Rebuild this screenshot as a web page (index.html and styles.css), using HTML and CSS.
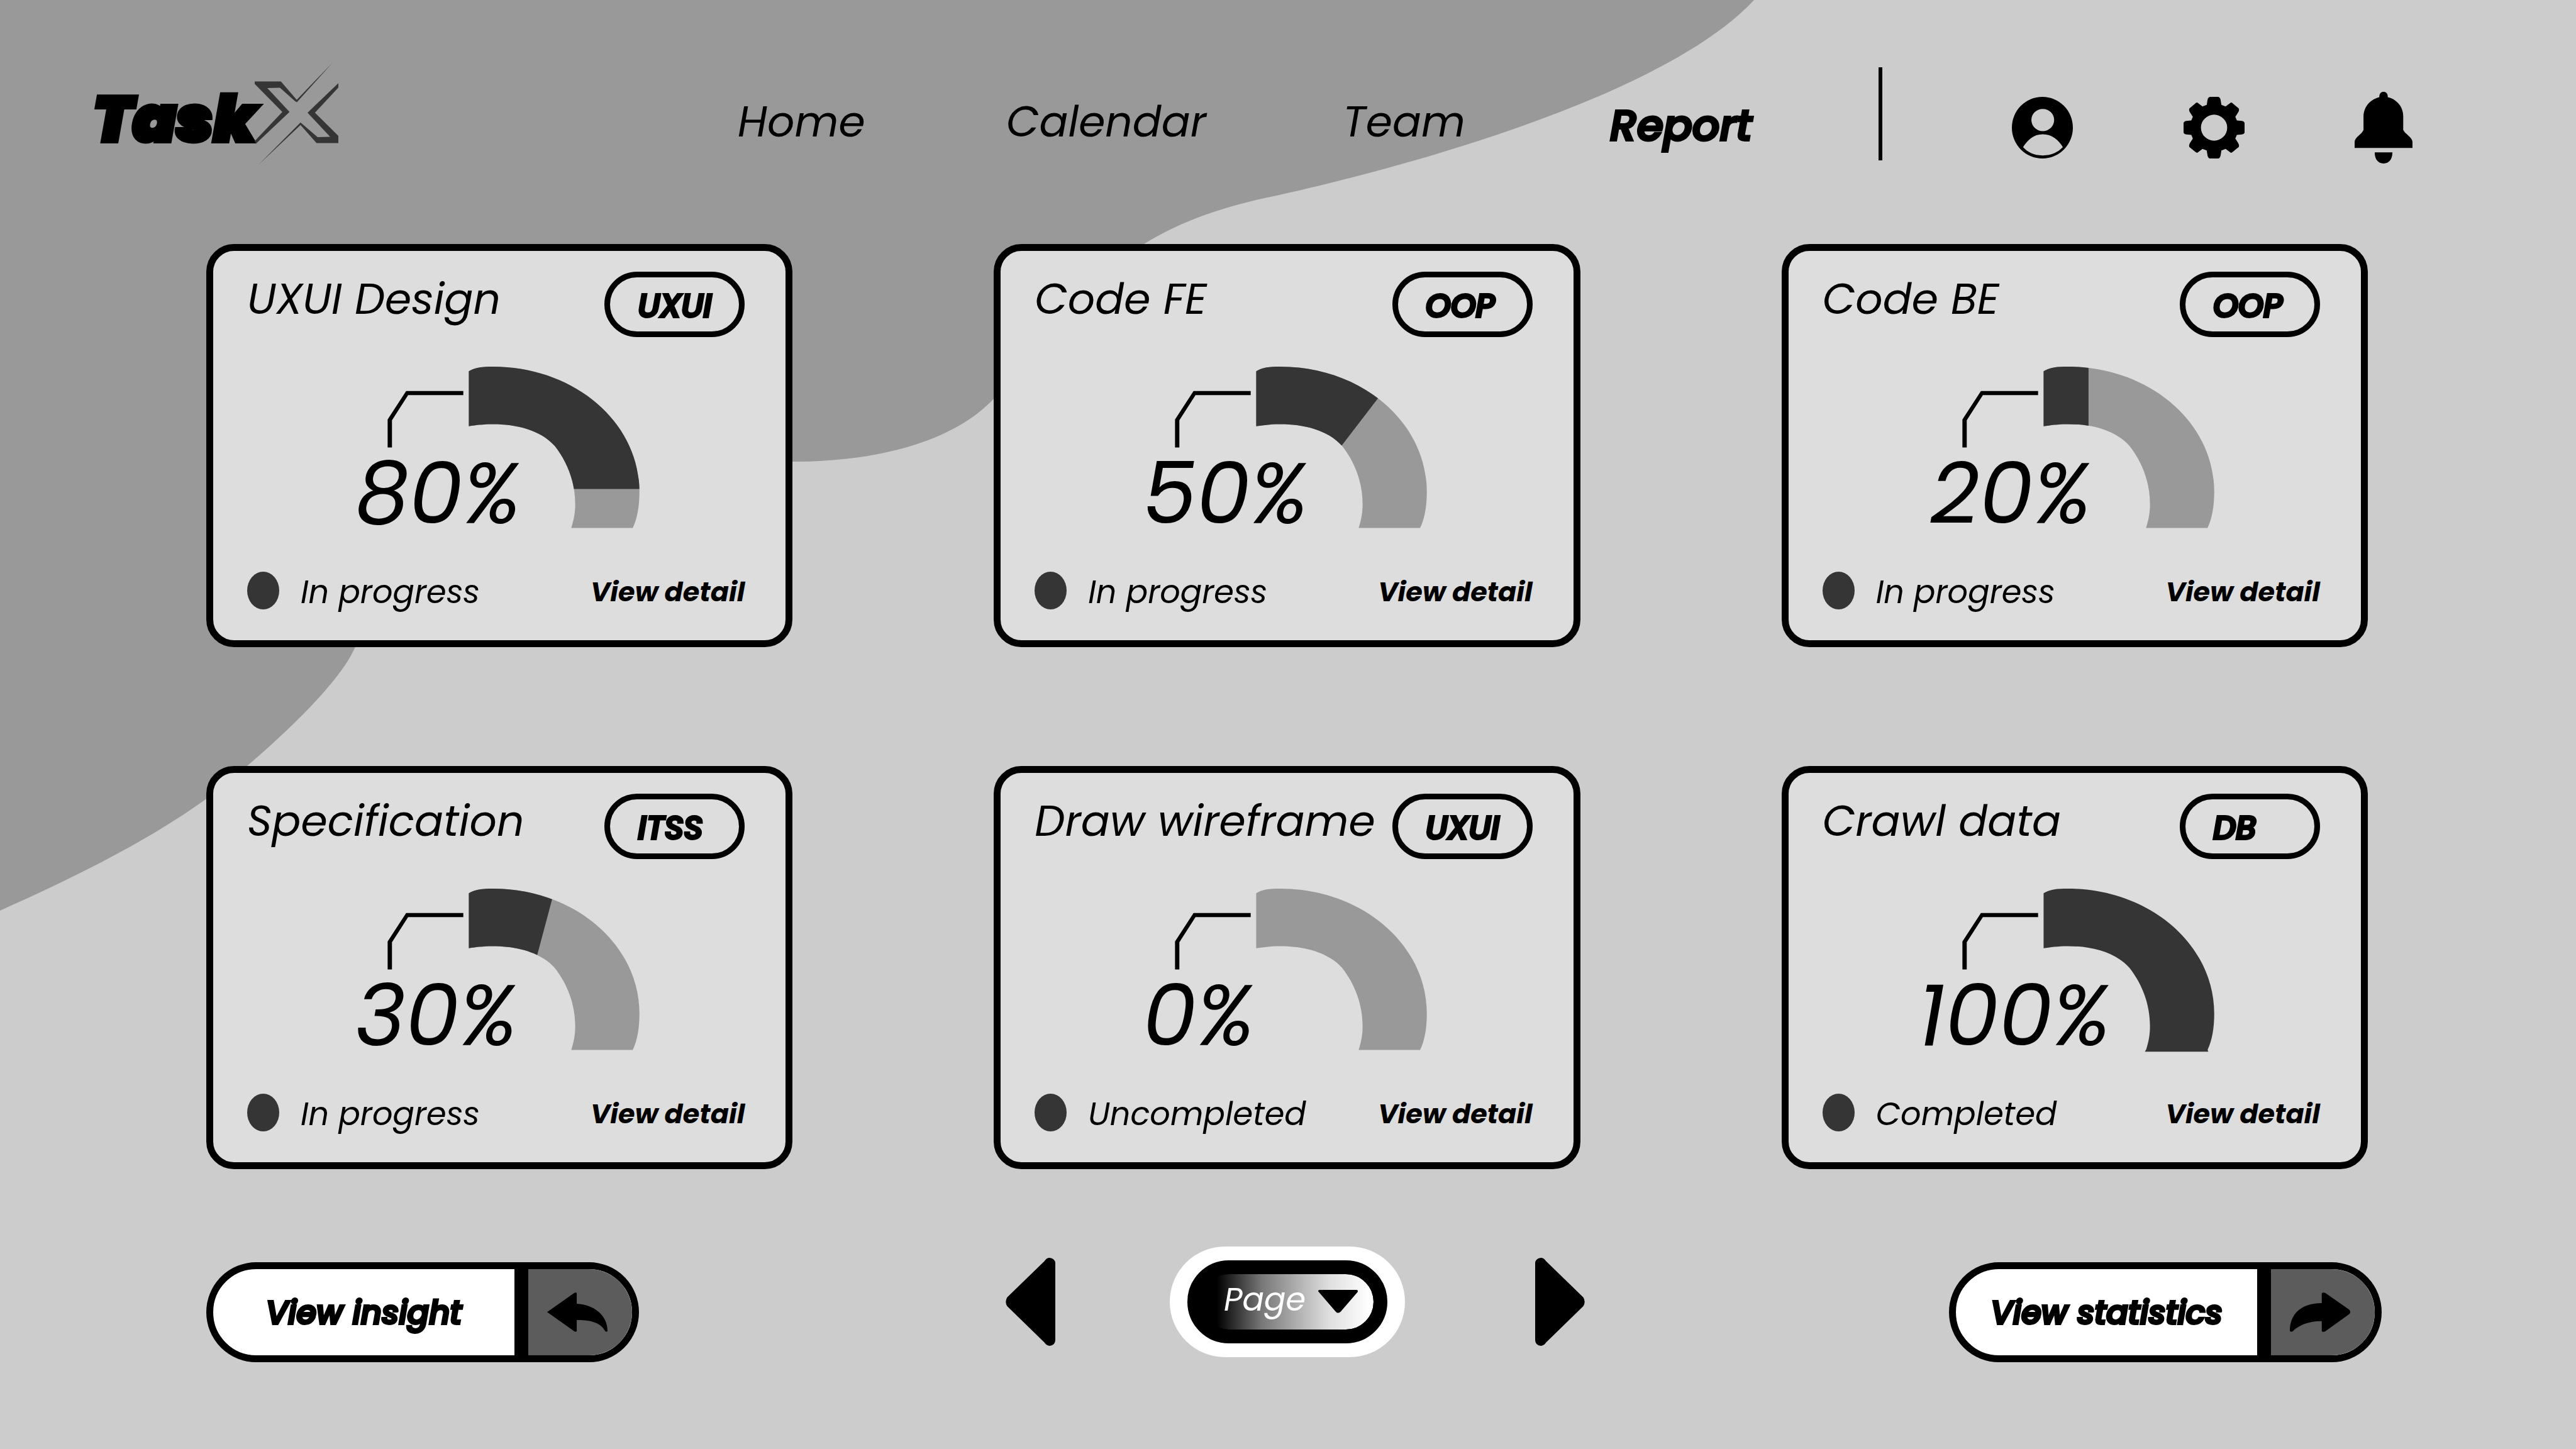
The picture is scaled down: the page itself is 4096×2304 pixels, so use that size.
FILE: index.html
```html
<!DOCTYPE html>
<html lang="en">
<head>
<meta charset="utf-8">
<title>TaskX – Report</title>
<meta name="viewport" content="width=device-width, initial-scale=1">
<link rel="stylesheet" href="styles.css">
</head>
<body>
<svg class="defs" aria-hidden="true">
  <defs>
    <path id="arc" d="M699 514C715 499 735 497 760 497C965 497 1132 700 1132 958C1132 1010 1127 1055 1115 1092H959C966 1060 969 1035 969 1004C969 925 950 850 917 789C880 730 820 709 760 709C735 709 715 713 699 717Z"/>
    <path id="leader" d="M493 795V692L540 587H685V602H545L504 695V795Z"/>
    <clipPath id="fill-80"><path d="M690 480H1150V948H690Z"/></clipPath>
    <clipPath id="fill-50"><path d="M690 480H1079L1010 610L915 790L862 890H690Z"/></clipPath>
    <clipPath id="fill-30"><path d="M690 480H921L910 538L872 745L863 795H690Z"/></clipPath>
    <clipPath id="fill-20"><path d="M690 480H813V800H690Z"/></clipPath>
  </defs>
</svg>
<div class="page">
  <svg class="backdrop" viewBox="0 0 4096 2304" preserveAspectRatio="none" aria-hidden="true">
    <path d="M0 0H2789C2650 150 2250 262 2030 311C1950 327 1880 350 1819 388C1720 450 1660 530 1582 632C1520 700 1400 734 1262 734C950 740 690 830 565 1028C543 1082 455 1165 393 1218C290 1312 130 1390 0 1448Z"/>
  </svg>

  <header class="topbar">
    <a class="logo" href="#" aria-label="TaskX">
      <span class="logo-text">Task</span>
      <svg class="logo-x" viewBox="909 92 418 630" preserveAspectRatio="none" aria-hidden="true">
        <path d="M909 207H1040L1119 320L1297 92L1120 335L1112 330L1035 246L972 248L1083 395L915 592L909 575L1047 395L909 222Z"/>
        <path d="M1327 217V245L1210 400L1327 543V588H1218L1138 476L928 722L1138 460L1223 551L1286 549L1173 400Z"/>
      </svg>
    </a>
    <nav class="nav" aria-label="Main">
      <a href="#">Home</a>
      <a href="#">Calendar</a>
      <a href="#">Team</a>
      <a class="current" href="#" aria-current="page">Report</a>
    </nav>
    <div class="tools">
      <button class="icon-button" type="button" aria-label="Account">
        <svg class="icon-user" viewBox="396 291 158 383" preserveAspectRatio="none"><path fill-rule="evenodd" d="M396 482.500A79 191.500 0 0 1 554 482.500A79 191.500 0 0 1 396 482.500ZM446.500 435A29.500 69 0 0 0 505.500 435A29.500 69 0 0 0 446.500 435ZM425 604C437 635 452 655 476 655C500 655 515 635 528 604C517 560 500 524 476 524C452 524 437 560 425 604Z"/></svg>
      </button>
      <button class="icon-button" type="button" aria-label="Settings">
        <svg class="icon-gear" viewBox="-79 -192 158 384" preserveAspectRatio="none"><path fill-rule="evenodd" d="M-11 -192H11Q16 -188 17 -172L19 -142L30 -132L43 -156Q46 -158 50 -148L64 -120Q66 -108 62 -94L55 -68L59 -45L72 -42Q79 -38 79 -28V28Q79 38 72 42L59 45L55 68L62 94Q66 108 64 120L50 148Q46 158 43 156L30 132L19 142L17 172Q16 188 11 192H-11Q-16 188 -17 172L-19 142L-30 132L-43 156Q-46 158 -50 148L-64 120Q-66 108 -62 94L-55 68L-59 45L-72 42Q-79 38 -79 28V-28Q-79 -38 -72 -42L-59 -45L-55 -68L-62 -94Q-66 -108 -64 -120L-50 -148Q-46 -158 -43 -156L-30 -132L-19 -142L-17 -172Q-16 -188 -11 -192ZM-34 0A34 81 0 0 0 34 0A34 81 0 0 0 -34 0Z"/></svg>
      </button>
      <button class="icon-button" type="button" aria-label="Notifications">
        <svg class="icon-bell" viewBox="1286 279 150 444" preserveAspectRatio="none"><path d="M1361 279C1367 279 1372 288 1372 312C1395 325 1412 370 1412 430V515C1416 540 1436 560 1436 590V627H1286V590C1286 560 1306 540 1309 515V430C1310 370 1327 325 1350 312C1350 288 1355 279 1361 279ZM1338 654H1384C1384 700 1374 723 1361 723C1348 723 1338 700 1338 654Z"/></svg>
      </button>
    </div>
  </header>

  <main>
    <section class="cards" aria-label="Task progress">
      <article class="card">
        <div class="card-head"><h2>UXUI Design</h2><span class="tag">UXUI</span></div>
        <div class="gauge">
          <svg viewBox="419 497 715 603" preserveAspectRatio="none" aria-hidden="true"><use href="#leader"/><use class="track" href="#arc"/><use class="fill" href="#arc" clip-path="url(#fill-80)"/></svg>
          <p class="value"><span>80%</span></p>
        </div>
        <div class="card-foot"><span class="dot"></span><span class="status">In progress</span><a href="#">View detail</a></div>
      </article>
      <article class="card">
        <div class="card-head"><h2>Code FE</h2><span class="tag">OOP</span></div>
        <div class="gauge">
          <svg viewBox="419 497 715 603" preserveAspectRatio="none" aria-hidden="true"><use href="#leader"/><use class="track" href="#arc"/><use class="fill" href="#arc" clip-path="url(#fill-50)"/></svg>
          <p class="value"><span>50%</span></p>
        </div>
        <div class="card-foot"><span class="dot"></span><span class="status">In progress</span><a href="#">View detail</a></div>
      </article>
      <article class="card">
        <div class="card-head"><h2>Code BE</h2><span class="tag">OOP</span></div>
        <div class="gauge">
          <svg viewBox="419 497 715 603" preserveAspectRatio="none" aria-hidden="true"><use href="#leader"/><use class="track" href="#arc"/><use class="fill" href="#arc" clip-path="url(#fill-20)"/></svg>
          <p class="value"><span>20%</span></p>
        </div>
        <div class="card-foot"><span class="dot"></span><span class="status">In progress</span><a href="#">View detail</a></div>
      </article>
      <article class="card">
        <div class="card-head"><h2>Specification</h2><span class="tag">ITSS</span></div>
        <div class="gauge">
          <svg viewBox="419 497 715 603" preserveAspectRatio="none" aria-hidden="true"><use href="#leader"/><use class="track" href="#arc"/><use class="fill" href="#arc" clip-path="url(#fill-30)"/></svg>
          <p class="value"><span>30%</span></p>
        </div>
        <div class="card-foot"><span class="dot"></span><span class="status">In progress</span><a href="#">View detail</a></div>
      </article>
      <article class="card">
        <div class="card-head"><h2>Draw wireframe</h2><span class="tag">UXUI</span></div>
        <div class="gauge">
          <svg viewBox="419 497 715 603" preserveAspectRatio="none" aria-hidden="true"><use href="#leader"/><use class="track" href="#arc"/></svg>
          <p class="value"><span>0%</span></p>
        </div>
        <div class="card-foot"><span class="dot"></span><span class="status">Uncompleted</span><a href="#">View detail</a></div>
      </article>
      <article class="card">
        <div class="card-head"><h2>Crawl data</h2><span class="tag">DB</span></div>
        <div class="gauge">
          <svg viewBox="419 497 715 603" preserveAspectRatio="none" aria-hidden="true"><use href="#leader"/><use class="fill" href="#arc"/><path class="fill" d="M959 1091H1115L1117 1098H956Z"/></svg>
          <p class="value"><span>100%</span></p>
        </div>
        <div class="card-foot"><span class="dot"></span><span class="status">Completed</span><a href="#">View detail</a></div>
      </article>
    </section>
  </main>

  <footer class="actions">
    <button class="split" type="button">
      <span class="split-label">View insight</span>
      <span class="split-icon"><svg viewBox="1192 353 206 241" preserveAspectRatio="none" aria-hidden="true"><path d="M1192 473L1285 356Q1293 350 1293 360V422C1350 427 1398 490 1398 588Q1394 596 1390 588C1375 540 1345 520 1293 521V586Q1293 596 1285 590Z"/></svg></span>
    </button>
    <div class="pager">
      <button class="icon-button" type="button" aria-label="Previous page">
        <svg class="arrow" viewBox="63 195 124 546" preserveAspectRatio="none"><path d="M67 440L160 215Q165 195 173 195Q187 200 187 230V705Q187 736 173 741Q165 741 160 721L67 495Q60 468 67 440Z"/></svg>
      </button>
      <div class="page-picker">
        <select aria-label="Page"><option>Page</option></select>
        <svg class="caret" viewBox="844 387 99 144" preserveAspectRatio="none" aria-hidden="true"><path d="M848 387H940Q945 390 942 402L900 522Q893 537 888 522L846 402Q841 390 848 387Z"/></svg>
      </div>
      <button class="icon-button" type="button" aria-label="Next page">
        <svg class="arrow" viewBox="-187 195 124 546" preserveAspectRatio="none"><path transform="scale(-1 1)" d="M67 440L160 215Q165 195 173 195Q187 200 187 230V705Q187 736 173 741Q165 741 160 721L67 495Q60 468 67 440Z"/></svg>
      </button>
    </div>
    <button class="split" type="button">
      <span class="split-label">View statistics</span>
      <span class="split-icon"><svg viewBox="1198 315 193 252" preserveAspectRatio="none" aria-hidden="true"><path d="M1388 453L1311 563Q1300 570 1300 558V498C1260 496 1225 525 1208 561Q1202 570 1198 560C1198 460 1230 383 1300 383V322Q1302 312 1311 318L1388 425Q1394 440 1388 453Z"/></svg></span>
    </button>
  </footer>
</div>
</body>
</html>
```
FILE: styles.css
```css
* {
  box-sizing: border-box;
}

body {
  margin: 0;
  background: #ccc;
  color: #000;
  font-family: Poppins, Inter, "Open Sans", sans-serif;
  font-style: italic;
}

a {
  color: inherit;
  text-decoration: none;
}

h2,
p {
  margin: 0;
  font-weight: 400;
}

button,
select {
  margin: 0;
  padding: 0;
  border: 0;
  background: none;
  color: inherit;
  font: inherit;
}

svg {
  display: block;
}

.defs {
  position: absolute;
  width: 0;
  height: 0;
}

.page {
  position: relative;
  min-height: 100vh;
  isolation: isolate;
}

.backdrop {
  position: absolute;
  inset: 0;
  z-index: -1;
  width: 100%;
  height: 100%;
  fill: #999;
}

/* Top bar */

.topbar {
  display: grid;
  grid-template-columns: 1025fr 1814fr 849fr;
  align-items: center;
  padding: 100px 260px 126px 148px;
}

.logo {
  display: flex;
  align-items: center;
}

.logo-text {
  width: 257px;
  padding-top: 18px;
  font-size: 102px;
  line-height: 100px;
  font-weight: 900;
  -webkit-text-stroke: 6px #000;
}

.logo-x {
  width: 133px;
  height: 162px;
  fill: #353535;
}

.nav {
  display: grid;
  grid-template-columns: 427fr 535fr 425fr 427fr;
  align-items: center;
  padding-top: 26px;
  font-size: 68px;
  line-height: 80px;
}

.nav .current {
  padding-top: 12px;
  font-weight: 500;
  -webkit-text-stroke: 4px #000;
}

.tools {
  display: flex;
  justify-content: space-between;
  align-items: center;
  height: 148px;
  padding: 44px 0 0 206px;
  border-left: 6px solid #000;
}

.icon-button {
  cursor: pointer;
}

.icon-user,
.icon-gear {
  width: 97px;
  height: 98px;
}

.icon-bell {
  width: 92px;
  height: 114px;
}

/* Cards */

.cards {
  display: grid;
  grid-template-columns: repeat(3, 1fr);
  gap: 189px 320px;
  padding: 0 331px 0 328px;
}

.card {
  padding: 33px 65px 49px 54px;
  border: 11px solid #000;
  border-radius: 44px;
  background: #ddd;
}

.card-head {
  display: flex;
  justify-content: space-between;
  align-items: center;
  white-space: nowrap;
}

.card-head h2 {
  padding-bottom: 16px;
  font-size: 68px;
  line-height: 80px;
}

.tag {
  width: 223px;
  padding: 4px 0 0 44px;
  border: 9px solid #000;
  border-radius: 52px;
  font-size: 51px;
  line-height: 82px;
  font-weight: 500;
  -webkit-text-stroke: 4px #000;
}

/* The leader line and the arc share one drawing, with the value set under the line */
.gauge {
  display: grid;
  width: 458px;
  height: 260px;
  margin: 47px auto 66px;
}

.gauge > * {
  grid-area: 1 / 1;
}

.gauge svg {
  justify-self: end;
  width: 448px;
  height: 260px;
}

.track {
  fill: #999;
}

.fill {
  fill: #353535;
}

.value {
  display: flex;
  justify-content: center;
  align-self: end;
  width: 266px;
  margin: 0 0 8px 5px;
  font-size: 136px;
  line-height: 100px;
}

.value span {
  flex: none;
  min-width: 266px;
}

.card-foot {
  display: flex;
  align-items: center;
  gap: 34px;
  font-size: 51px;
  line-height: 56px;
}

.dot {
  width: 51px;
  height: 60px;
  border-radius: 50%;
  background: #353535;
}

.status,
.card-foot a {
  padding-top: 4px;
}

.card-foot a {
  margin-left: auto;
  font-size: 43px;
  font-weight: 700;
}

/* Bottom actions */

.actions {
  display: flex;
  justify-content: space-between;
  align-items: flex-start;
  padding: 123px 309px 0 328px;
}

.split {
  display: flex;
  width: 688px;
  height: 159px;
  margin-top: 25px;
  overflow: hidden;
  border: 11px solid #000;
  border-radius: 80px;
  background: #fff;
  cursor: pointer;
}

.split-label {
  flex: 1;
  align-self: center;
  font-size: 51px;
  line-height: 60px;
  font-weight: 500;
  -webkit-text-stroke: 4px #000;
}

.split-icon {
  display: flex;
  align-items: center;
  align-self: stretch;
  width: 187px;
  padding-left: 30px;
  border-left: 22px solid #000;
  background: #5c5c5c;
}

.split-icon svg {
  width: 96px;
  height: 63px;
}

.pager {
  display: flex;
  align-items: center;
  margin-left: 4px;
}

.arrow {
  width: 79px;
  height: 140px;
}

.page-picker {
  position: relative;
  margin: 0 207px 0 182px;
  padding: 22px 28px;
  border-radius: 88px;
  background: #fff;
}

.page-picker select {
  display: block;
  appearance: none;
  width: 318px;
  height: 132px;
  padding: 0 0 8px 36px;
  border: 22px solid #000;
  border-radius: 66px;
  background:
    linear-gradient(90deg, #000 9%, #777 35%, #b0b0b0 56%, #e0e0e0 75%, #fff 98%) padding-box,
    linear-gradient(#000, #000) border-box;
  color: #fff;
  font-size: 51px;
}

.caret {
  position: absolute;
  top: 69px;
  right: 75px;
  width: 63px;
  height: 37px;
  pointer-events: none;
}
```
